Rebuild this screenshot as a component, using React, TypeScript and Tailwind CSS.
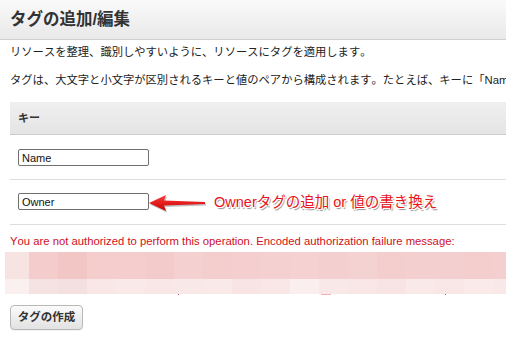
import React from 'react';

const topRow = [
  'bg-[#f8e3e3] w-[24px]',
  'bg-[#f5cccc] w-[29px]',
  'bg-[#f3c6c6] w-[29px]',
  'bg-[#f5cdcd] w-[29px]',
  'bg-[#f5cdcd] w-[29px]',
  'bg-[#f3cbcb] w-[29px]',
  'bg-[#f5d0d0] w-[29px]',
  'bg-[#f4cdcd] w-[29px]',
  'bg-[#f5cfcf] w-[29px]',
  'bg-[#f4d0d0] w-[29px]',
  'bg-[#f5d1d1] w-[29px]',
  'bg-[#f4cfcf] w-[29px]',
  'bg-[#f5d2d2] w-[29px]',
  'bg-[#f4cdcd] w-[29px]',
  'bg-[#f4cfcf] w-[29px]',
  'bg-[#f4cfcf] w-[29px]',
  'bg-[#f4cecd] w-[29px]',
  'bg-[#f4cfcf] flex-1',
];

const bottomRow = [
  'bg-[#faf0f0] w-[24px]',
  'bg-[#f5e2e2] w-[29px]',
  'bg-[#f4e0e0] w-[29px]',
  'bg-[#f9e7e7] w-[29px]',
  'bg-[#fae9e9] w-[29px]',
  'bg-[#f9e6e6] w-[29px]',
  'bg-[#f9e8e8] w-[29px]',
  'bg-[#f9e9e9] w-[29px]',
  'bg-[#f8e4e4] w-[29px]',
  'bg-[#f9e6e6] w-[29px]',
  'bg-[#fbeeee] w-[29px]',
  'bg-[#f9e8e8] w-[29px]',
  'bg-[#f9e7e7] w-[29px]',
  'bg-[#f8e4e4] w-[29px]',
  'bg-[#f9e9e9] w-[29px]',
  'bg-[#f9e6e6] w-[29px]',
  'bg-[#faeaea] w-[29px]',
  'bg-[#f9e8e8] flex-1',
];

const jp = "font-['Liberation_Sans','Noto_Sans_CJK_JP',sans-serif]";

// red call-out arrow pointing left at the Owner field
const Arrow: React.FC = () => (
  <svg width="60" height="20" viewBox="0 0 60 20" className="shrink-0 -ml-[2px]">
    <defs>
      <linearGradient id="ar" x1="0" y1="0" x2="0" y2="1">
        <stop offset="0" stopColor="#ff3b3b" />
        <stop offset="1" stopColor="#c80000" />
      </linearGradient>
    </defs>
    <path d="M2 10 L19 2 L17 7.5 L58 9 L58 11 L17 12.5 L19 18 Z" fill="#000" opacity="0.25" transform="translate(1 1.5)" />
    <path d="M2 10 L19 2 L17 7.5 L58 9 L58 11 L17 12.5 L19 18 Z" fill="url(#ar)" />
  </svg>
);

const KeyInput: React.FC<{ value: string }> = ({ value }) => (
  <input
    readOnly
    value={value}
    className="w-[131px] h-[17px] border border-[#6f6f6f] rounded-[2px] px-[3px] text-[11px] text-[#111] bg-white font-['Liberation_Sans',sans-serif] outline-none shrink-0"
  />
);

export default function App() {
  return (
    <div className={`w-[506px] h-[338px] overflow-hidden bg-white text-[#222] [font-kerning:none] ${jp}`}>
      <div className="h-[40px] bg-gradient-to-b from-[#fafafa] to-[#e9e9e9] border-b border-[#cfcfcf] flex items-center px-[10px]">
        <h1 className="text-[16.5px] font-bold text-[#333] leading-none">タグの追加/編集</h1>
      </div>

      <p className="text-[11.3px] pl-[10px] mt-[5px] leading-[14px] whitespace-nowrap">
        リソースを整理、識別しやすいように、リソースにタグを適用します。
      </p>
      <p className="text-[11.3px] pl-[10px] mt-[14px] leading-[14px] whitespace-nowrap">
        タグは、大文字と小文字が区別されるキーと値のペアから構成されます。たとえば、キーに「Name」、値に「Webserver」のタグを定義できます。
      </p>

      <div className="ml-[10px] mt-[15px]">
        <div className="h-[33px] bg-gradient-to-b from-[#f0f0f0] to-[#e4e4e4] border-b border-[#cccccc] flex items-center pl-[8px]">
          <span className="text-[11px] font-bold text-[#333]">キー</span>
        </div>
        <div className="h-[45px] border-b border-[#dddddd] flex items-start pt-[14px] pl-[8px]">
          <KeyInput value="Name" />
        </div>
        <div className="h-[45px] border-b border-[#dddddd] flex items-start pt-[13px] pl-[8px]">
          <KeyInput value="Owner" />
          <div className="flex items-center h-[19px]">
            <Arrow />
            <span className="ml-[7px] text-[14.5px] text-[#e8141b] whitespace-nowrap leading-none [text-shadow:1px_1px_0_#fff,-1px_-1px_0_#fff,1px_-1px_0_#fff,-1px_1px_0_#fff,1.5px_2px_1px_#888]">
              Ownerタグの追加 or 値の書き換え
            </span>
          </div>
        </div>
      </div>

      <p className="pl-[10px] mt-[9px] text-[11.3px] leading-[14px] text-[#d0101b] whitespace-nowrap font-['Liberation_Sans',sans-serif]">
        You are not authorized to perform this operation. Encoded authorization failure message:
      </p>

      <div className="ml-[5px] mt-[4px]">
        <div className="flex h-[27px]">
          {topRow.map((c, i) => (
            <div key={i} className={c} />
          ))}
        </div>
        <div className="flex h-[15px]">
          {bottomRow.map((c, i) => (
            <div key={i} className={c} />
          ))}
        </div>
        <div className="relative h-[2px]">
          <div className="absolute left-[173px] top-0 w-[1px] h-[1px] bg-[#e05050]" />
          <div className="absolute left-[316px] top-0 w-[10px] h-[1px] bg-[#f2b0b0]" />
          <div className="absolute left-[440px] top-0 w-[1px] h-[1px] bg-[#e05050]" />
        </div>
      </div>

      <div className="pl-[10px] mt-[8px]">
        <button className="w-[73px] h-[25px] rounded-[4px] border border-[#b8b8b8] bg-gradient-to-b from-[#fbfbfb] to-[#e2e2e2] text-[11.5px] font-bold text-[#333] shadow-[0_1px_0_rgba(0,0,0,0.05)]">
          タグの作成
        </button>
      </div>
    </div>
  );
}
